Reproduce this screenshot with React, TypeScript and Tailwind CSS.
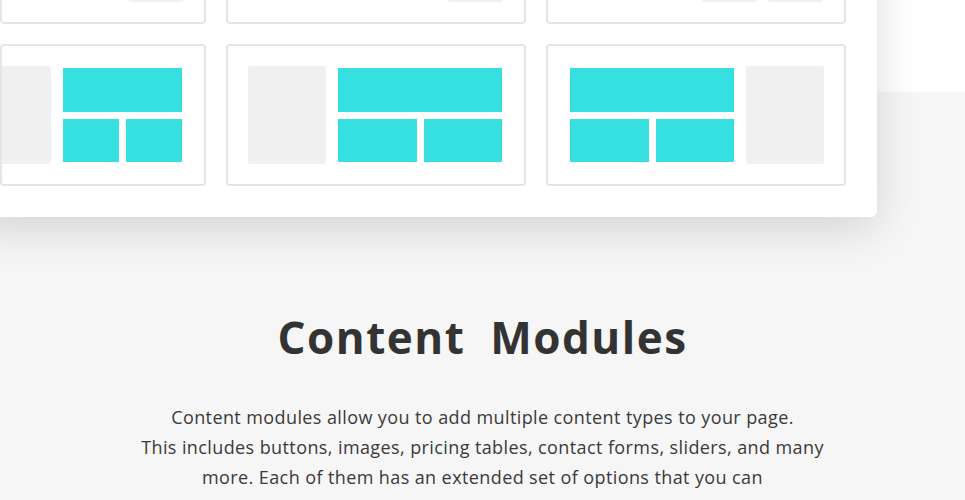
import React from "react";

const Cyan = ({ className = "" }: { className?: string }) => (
  <div className={`flex flex-col gap-[7px] my-[2px] ${className}`}>
    <div className="h-[44px] bg-[#36dfe0]" />
    <div className="grid grid-cols-2 gap-[7px] h-[43px]">
      <div className="bg-[#36dfe0]" />
      <div className="bg-[#36dfe0]" />
    </div>
  </div>
);

const Gray = ({ className = "" }: { className?: string }) => (
  <div className={`w-[78px] h-[98px] shrink-0 rounded-[3px] bg-[#f0f0f0] ${className}`} />
);

export default function App() {
  return (
    <div
      className="w-[965px] h-[500px] overflow-hidden bg-[linear-gradient(to_bottom,#ffffff_92px,#f6f6f6_92px)]"
      style={{ fontFamily: '"Open Sans", "Liberation Sans", sans-serif' }}
    >
      {/* Card */}
      <div className="-mt-[149px] -ml-[31px] w-[908px] rounded-[6px] bg-white p-[31px] shadow-[0_12px_45px_rgba(0,0,0,0.14)]">
        <div className="grid grid-cols-[206px_300px_300px] gap-x-[20px] gap-y-[20px]">
          {/* Row 1 */}
          <div className="h-[142px] rounded-[4px] border-2 border-[#e5e5e5] flex items-end justify-end pr-[20px] pb-[20px]">
            <div className="w-[56px] h-[30px] rounded-[3px] bg-[#f0f0f0]" />
          </div>
          <div className="h-[142px] rounded-[4px] border-2 border-[#e5e5e5] flex items-end justify-end pr-[21px] pb-[20px]">
            <div className="w-[56px] h-[30px] rounded-[3px] bg-[#f0f0f0]" />
          </div>
          <div className="h-[142px] rounded-[4px] border-2 border-[#e5e5e5] flex items-end justify-end gap-[10px] pr-[21px] pb-[20px]">
            <div className="w-[56px] h-[30px] rounded-[3px] bg-[#f0f0f0]" />
            <div className="w-[56px] h-[30px] rounded-[3px] bg-[#f0f0f0]" />
          </div>

          {/* Row 2 */}
          <div className="h-[142px] overflow-hidden rounded-[4px] border-2 border-[#e5e5e5] flex items-start justify-end gap-[12px] pt-[20px] pr-[22px]">
            <Gray />
            <Cyan className="w-[119px] shrink-0" />
          </div>
          <div className="h-[142px] rounded-[4px] border-2 border-[#e5e5e5] flex items-start gap-[12px] pt-[20px] pl-[20px]">
            <Gray />
            <Cyan className="w-[164px] shrink-0" />
          </div>
          <div className="h-[142px] rounded-[4px] border-2 border-[#e5e5e5] flex items-start gap-[12px] pt-[20px] pl-[22px]">
            <Cyan className="w-[164px] shrink-0" />
            <Gray />
          </div>
        </div>
      </div>

      {/* Text section */}
      <div className="flex flex-col items-center text-center">
        <h2 className="mt-[94px] text-[44px] leading-[52px] font-bold tracking-[1.5px] text-[#333333] [word-spacing:12px]">
          Content Modules
        </h2>
        <p className="mt-[39px] text-[18px] leading-[30px] tracking-[0.4px] text-[#3a3a3a]">
          Content modules allow you to add multiple content types to your page.
          <br />
          This includes buttons, images, pricing tables, contact forms, sliders, and many
          <br />
          more. Each of them has an extended set of options that you can
        </p>
      </div>
    </div>
  );
}
